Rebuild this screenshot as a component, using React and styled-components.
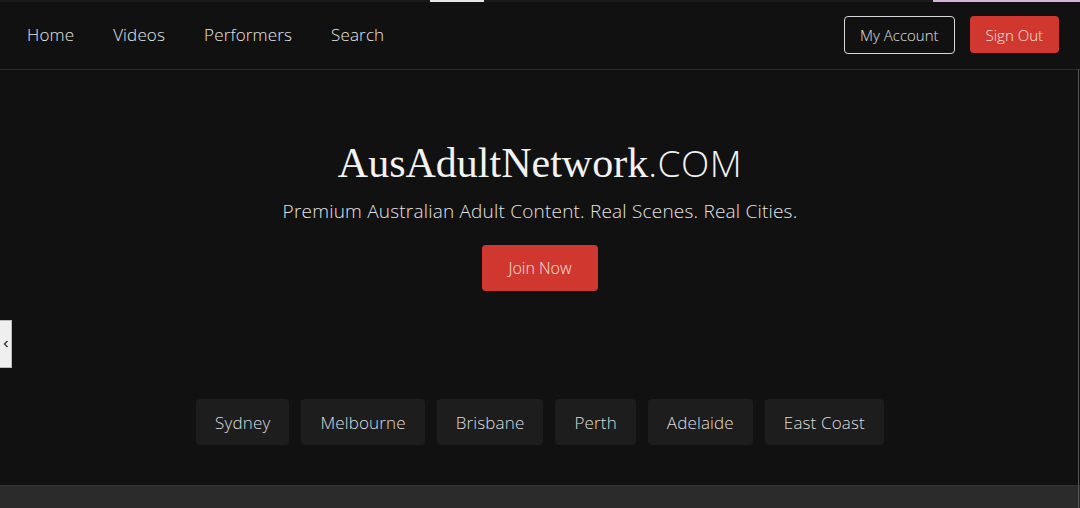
import React from 'react';
import styled, { createGlobalStyle } from 'styled-components';

const GlobalStyle = createGlobalStyle`
  html, body {
    margin: 0;
    padding: 0;
    background: #111111;
    font-family: 'Open Sans', 'Noto Sans', sans-serif;
    overflow: hidden;
  }
`;

const Page = styled.div`
  position: relative;
  width: 1080px;
  height: 508px;
  background: #111111;
  color: #e8e8e8;
  display: flex;
  flex-direction: column;
  overflow: hidden;
`;

const TopStrip = styled.div`
  height: 2px;
  background: #1a1a1a;
  display: flex;
`;

const StripSegment = styled.div`
  width: ${(p) => p.w}px;
  background: ${(p) => p.color || 'transparent'};
`;

const Header = styled.header`
  height: 67px;
  border-bottom: 1px solid #2a2a2a;
  display: flex;
  align-items: center;
  justify-content: space-between;
  padding: 0 21px 0 27px;
`;

const Nav = styled.nav`
  display: flex;
  gap: 39px;
  margin-top: -3px;
`;

const NavLink = styled.a`
  font-size: 17px;
  font-weight: 300;
  color: #e6e6e6;
  text-decoration: none;
  letter-spacing: 0.15px;
`;

const Actions = styled.div`
  display: flex;
  gap: 15px;
  align-items: center;
  margin-top: -2px;
`;

const OutlineButton = styled.button`
  height: 38px;
  padding: 0 15px;
  background: transparent;
  border: 1.5px solid #d8d8d8;
  border-radius: 4px;
  color: #e0e0e0;
  font-family: inherit;
  font-size: 15px;
  font-weight: 300;
`;

const RedButton = styled.button`
  height: ${(p) => p.h || 37}px;
  padding: 0 ${(p) => p.px || 16}px;
  background: #d0382f;
  border: none;
  border-radius: 4px;
  color: #fbe1de;
  font-family: inherit;
  font-size: ${(p) => p.fs || 15}px;
  font-weight: 300;
  margin-top: ${(p) => p.mt || 0}px;
`;

const Hero = styled.section`
  display: flex;
  flex-direction: column;
  align-items: center;
  padding-top: 68px;
  flex: 1;
`;

const Title = styled.h1`
  margin: 0;
  font-family: 'Liberation Serif', 'DejaVu Serif', serif;
  font-weight: 400;
  font-size: 42px;
  line-height: 50px;
  color: #f2f2f2;
  letter-spacing: 0px;
`;

const Dotcom = styled.span`
  font-family: 'Open Sans', 'Noto Sans', sans-serif;
  font-weight: 300;
  font-size: 37px;
  letter-spacing: 0.5px;
`;

const Tagline = styled.p`
  margin: 10px 0 0;
  font-size: 19px;
  font-weight: 300;
  color: #e4e4e4;
  letter-spacing: 0.2px;
`;

const Cities = styled.div`
  display: flex;
  gap: 12px;
  margin-top: 108px;
`;

const CityButton = styled.button`
  height: 46px;
  padding: 0 19px;
  background: #1d1d1d;
  border: none;
  border-radius: 4px;
  color: #dedede;
  font-family: inherit;
  font-size: 17px;
  font-weight: 300;
  letter-spacing: 0.15px;
`;

const Footer = styled.div`
  height: 22px;
  background: #2b2b2b;
  border-top: 1px solid #333;
`;

const SideTab = styled.div`
  position: absolute;
  left: 0;
  top: 320px;
  width: 12px;
  height: 48px;
  background: #efefef;
  border: 1px solid #bbb;
  border-left: none;
  box-sizing: border-box;
  display: flex;
  align-items: center;
  justify-content: center;
`;

const RightEdge = styled.div`
  position: absolute;
  right: 1px;
  top: 69px;
  width: 1px;
  height: 439px;
  background: #555;
`;

const cities = ['Sydney', 'Melbourne', 'Brisbane', 'Perth', 'Adelaide', 'East Coast'];

const App = () => (
  <>
    <GlobalStyle />
    <Page>
      <TopStrip>
        <StripSegment w={430} />
        <StripSegment w={54} color="#e6e6e6" />
        <StripSegment w={449} />
        <StripSegment w={147} color="#d6b2dc" />
      </TopStrip>
      <Header>
        <Nav>
          {['Home', 'Videos', 'Performers', 'Search'].map((n) => (
            <NavLink key={n} href="#">{n}</NavLink>
          ))}
        </Nav>
        <Actions>
          <OutlineButton>My Account</OutlineButton>
          <RedButton>Sign Out</RedButton>
        </Actions>
      </Header>
      <Hero>
        <Title>
          AusAdultNetwork<Dotcom>.COM</Dotcom>
        </Title>
        <Tagline>Premium Australian Adult Content. Real Scenes. Real Cities.</Tagline>
        <RedButton h={46} px={26} fs={16} mt={21}>Join Now</RedButton>
        <Cities>
          {cities.map((c) => (
            <CityButton key={c}>{c}</CityButton>
          ))}
        </Cities>
      </Hero>
      <Footer />
      <SideTab>
        <svg width="6" height="8" viewBox="0 0 6 8">
          <path d="M4.5 1 L1.5 4 L4.5 7" fill="none" stroke="#333" strokeWidth="1.3" />
        </svg>
      </SideTab>
      <RightEdge />
    </Page>
  </>
);

export default App;
